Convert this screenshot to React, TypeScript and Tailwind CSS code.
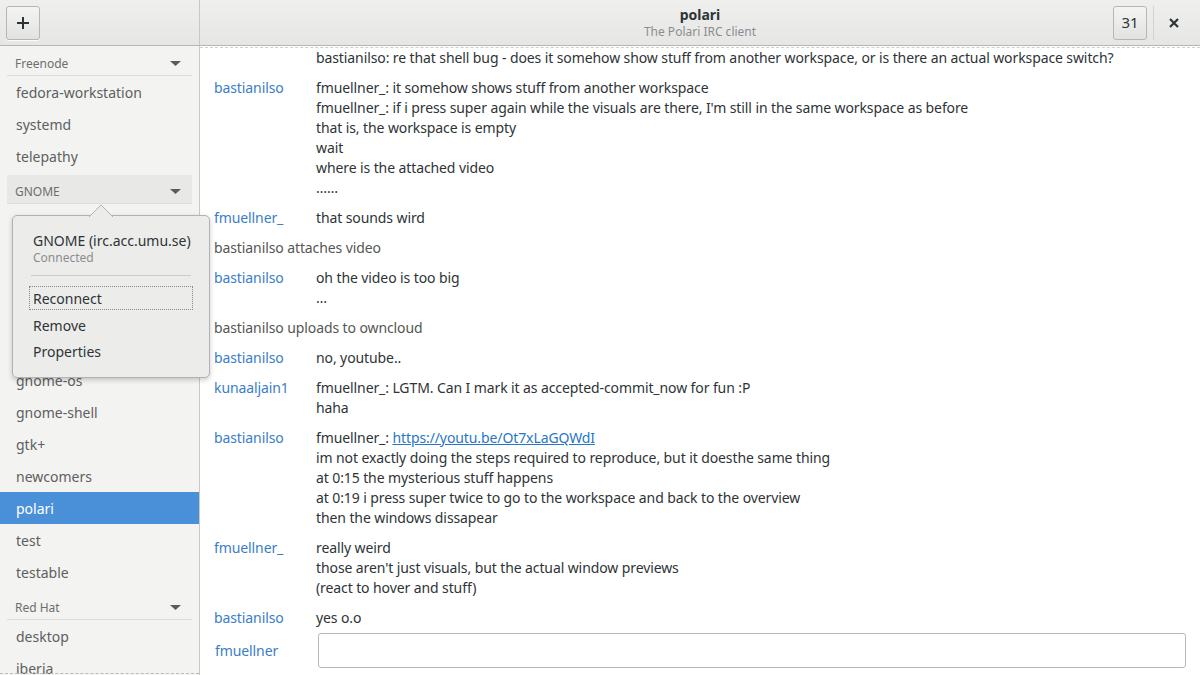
import React from "react";

type Seg = string | { link: string };
type Group =
  | { kind: "msg"; nick: string; lines: Seg[][] }
  | { kind: "status"; text: string };

const groups: Group[] = [
  { kind: "msg", nick: "", lines: [["bastianilso: re that shell bug - does it somehow show stuff from another workspace, or is there an actual workspace switch?"]] },
  {
    kind: "msg",
    nick: "bastianilso",
    lines: [
      ["fmuellner_: it somehow shows stuff from another workspace"],
      ["fmuellner_: if i press super again while the visuals are there, I'm still in the same workspace as before"],
      ["that is, the workspace is empty"],
      ["wait"],
      ["where is the attached video"],
      ["……"],
    ],
  },
  { kind: "msg", nick: "fmuellner_", lines: [["that sounds wird"]] },
  { kind: "status", text: "bastianilso attaches video" },
  { kind: "msg", nick: "bastianilso", lines: [["oh the video is too big"], ["…"]] },
  { kind: "status", text: "bastianilso uploads to owncloud" },
  { kind: "msg", nick: "bastianilso", lines: [["no, youtube.."]] },
  { kind: "msg", nick: "kunaaljain1", lines: [["fmuellner_: LGTM. Can I mark it as accepted-commit_now for fun :P"], ["haha"]] },
  {
    kind: "msg",
    nick: "bastianilso",
    lines: [
      ["fmuellner_: ", { link: "https://youtu.be/Ot7xLaGQWdI" }],
      ["im not exactly doing the steps required to reproduce, but it doesthe same thing"],
      ["at 0:15 the mysterious stuff happens"],
      ["at 0:19 i press super twice to go to the workspace and back to the overview"],
      ["then the windows dissapear"],
    ],
  },
  {
    kind: "msg",
    nick: "fmuellner_",
    lines: [["really weird"], ["those aren't just visuals, but the actual window previews"], ["(react to hover and stuff)"]],
  },
  { kind: "msg", nick: "bastianilso", lines: [["yes o.o"]] },
];

function Triangle() {
  return (
    <svg width="11" height="5" viewBox="0 0 11 5" className="shrink-0 block">
      <path d="M0 0 L11 0 L5.5 5 Z" fill="#5c5c5c" />
    </svg>
  );
}

function NetHeader({ name, hover, first }: { name: string; hover?: boolean; first?: boolean }) {
  return (
    <div className={first ? "pt-[1px]" : "pt-[3px]"}>
      <div
        className={
          "mx-[7px] h-[29px] flex items-end justify-between pl-[8px] pr-[11px] pb-[3px] border-b border-[#dcdcda] " +
          (hover ? "bg-[#e8e8e7]" : "")
        }
      >
        <span className="text-[12px] leading-[16px] text-[#6e6e6e]">{name}</span>
        <div className="pb-[6px]">
          <Triangle />
        </div>
      </div>
    </div>
  );
}

function Room({ name, selected }: { name: string; selected?: boolean }) {
  return (
    <div
      className={
        "h-[32px] shrink-0 flex items-center pl-[16px] text-[14px] " +
        (selected ? "bg-[#4a90d9] text-white" : "text-[#5d5f5f]")
      }
    >
      {name}
    </div>
  );
}

export default function App() {
  return (
    <div
      className="w-[1200px] h-[675px] overflow-hidden flex flex-col bg-white text-[#2e3436] relative"
      style={{ fontFamily: '"Noto Sans", "Open Sans", sans-serif' }}
    >
      {/* Header bar */}
      <div className="h-[46px] shrink-0 flex bg-gradient-to-b from-[#efefee] to-[#e6e6e5] border-b border-[#b6b6b3]">
        <div className="w-[200px] shrink-0 border-r border-[#c8c8c6] flex items-center pl-[6px]">
          <button className="w-[34px] h-[34px] rounded-[3px] border border-[#b6b6b3] bg-gradient-to-b from-[#f4f4f4] to-[#e2e2e1] flex items-center justify-center text-[#2e3436] shadow-[0_1px_0_rgba(255,255,255,0.8)]">
            <svg width="12" height="12" viewBox="0 0 12 12">
              <path d="M5 0 H7 V5 H12 V7 H7 V12 H5 V7 H0 V5 H5 Z" fill="#2e3436" />
            </svg>
          </button>
        </div>
        <div className="flex-1 flex items-center relative">
          <div className="absolute inset-0 flex flex-col items-center justify-center">
            <div className="text-[14px] leading-[18px] font-bold text-[#2e3436]">polari</div>
            <div className="text-[12px] leading-[16px] text-[#8b8e8f]">The Polari IRC client</div>
          </div>
          <div className="ml-auto flex items-center pr-[6px] relative">
            <button className="w-[34px] h-[34px] rounded-[3px] border border-[#b6b6b3] bg-gradient-to-b from-[#f4f4f4] to-[#e2e2e1] text-[15px] text-[#2e3436] flex items-center justify-center">
              31
            </button>
            <div className="w-[1px] h-[34px] bg-[#d4d4d2] ml-[6px]" />
            <div className="w-[40px] h-[34px] flex items-center justify-center">
              <svg width="10" height="10" viewBox="0 0 10 10">
                <path d="M1 1 L9 9 M9 1 L1 9" stroke="#2e3436" strokeWidth="2.2" />
              </svg>
            </div>
          </div>
        </div>
      </div>

      {/* Body */}
      <div className="flex-1 flex min-h-0">
        {/* Sidebar */}
        <div className="w-[200px] shrink-0 bg-[#f3f3f2] border-r border-[#c8c8c6] flex flex-col overflow-hidden relative">
          <NetHeader name="Freenode" first />
          <Room name="fedora-workstation" />
          <Room name="systemd" />
          <Room name="telepathy" />
          <NetHeader name="GNOME" hover />
          <Room name="" />
          <Room name="" />
          <Room name="" />
          <Room name="" />
          <Room name="" />
          <Room name="gnome-os" />
          <Room name="gnome-shell" />
          <Room name="gtk+" />
          <Room name="newcomers" />
          <Room name="polari" selected />
          <Room name="test" />
          <Room name="testable" />
          <NetHeader name="Red Hat" />
          <Room name="desktop" />
          <Room name="iberia" />
          <div className="absolute left-0 right-0 bottom-[1px] border-t border-dashed border-[#bdbdbb]" />
        </div>

        {/* Chat */}
        <div className="flex-1 flex flex-col min-w-0">
          <div className="flex-1 min-h-0 overflow-hidden mt-[1px] border-t border-dashed border-[#cfcfcd]">
            <div className="flex flex-col gap-[10px] pl-[14px] text-[14px] leading-[20px] tracking-[-0.1px]">
              {groups.map((g, i) =>
                g.kind === "status" ? (
                  <div key={i} className="text-[#555753]">
                    {g.text}
                  </div>
                ) : (
                  <div key={i} className="flex">
                    <div className="w-[102px] shrink-0 text-[#3b7dc7]">{g.nick}</div>
                    <div className="flex flex-col">
                      {g.lines.map((l, j) => (
                        <div key={j} className="whitespace-nowrap">
                          {l.map((s, k) =>
                            typeof s === "string" ? (
                              <span key={k}>{s}</span>
                            ) : (
                              <span key={k} className="text-[#2a76c6] underline">
                                {s.link}
                              </span>
                            )
                          )}
                        </div>
                      ))}
                    </div>
                  </div>
                )
              )}
            </div>
          </div>
          <div className="h-[47px] shrink-0 flex items-start pl-[15px] pr-[14px] pt-[5px]">
            <div className="w-[103px] shrink-0 text-[14px] leading-[35px] text-[#3b7dc7] tracking-[-0.1px]">fmuellner</div>
            <div className="flex-1 h-[35px] rounded-[3px] border border-[#b6b6b3] bg-white" />
          </div>
        </div>
      </div>

      {/* Popover */}
      <div className="absolute left-[12px] top-[215px] w-[198px] h-[163px] rounded-[5px] border border-[#b2b2b0] bg-[#ececeb] shadow-[0_2px_5px_rgba(0,0,0,0.2)] pt-[16px] px-[17px]">
        <div className="absolute left-[76px] top-[-12px] w-0 h-0">
          <svg width="24" height="13" viewBox="0 0 24 13" className="absolute left-0 top-0">
            <path d="M0 13 L12 1 L24 13" fill="#ececeb" stroke="#b2b2b0" strokeWidth="1" />
          </svg>
        </div>
        <div className="pl-[3px] text-[14px] leading-[18px] text-[#2e3436]">GNOME (irc.acc.umu.se)</div>
        <div className="pl-[3px] text-[12px] leading-[16px] text-[#8b8e8f]">Connected</div>
        <div className="h-[1px] bg-[#cbcbc9] mt-[9px] mb-[10px] mx-[1px]" />
        <div className="flex flex-col -mx-[1px]">
          <div className="h-[24px] border border-dotted border-[#8a8a88] flex items-center pl-[3px] text-[14px] text-[#2e3436] mb-[2px]">
            Reconnect
          </div>
          <div className="h-[26px] flex items-center pl-[4px] text-[14px] text-[#2e3436]">Remove</div>
          <div className="h-[26px] flex items-center pl-[4px] text-[14px] text-[#2e3436]">Properties</div>
        </div>
      </div>
    </div>
  );
}
